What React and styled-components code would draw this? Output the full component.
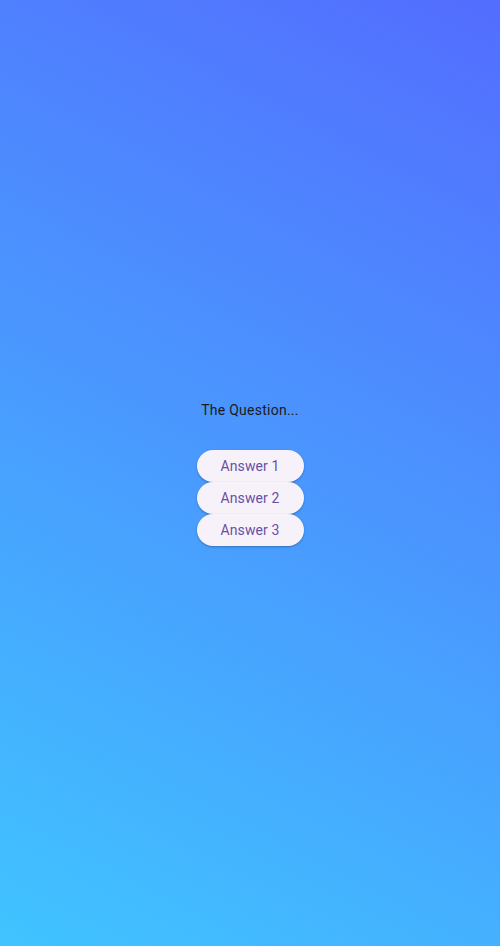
import React from "react";
import styled, { createGlobalStyle } from "styled-components";

const GlobalStyle = createGlobalStyle`
  html, body {
    margin: 0;
    padding: 0;
    height: 100%;
  }
  #root {
    height: 100%;
  }
`

const Screen = styled.div`
  width: 100%;
  height: 946px;
  display: flex;
  flex-direction: column;
  align-items: center;
  justify-content: center;
  background: linear-gradient(207.86deg, #536dfe 0%, #40c4ff 100%);
  font-family: Roboto, "Noto Sans", sans-serif;
`

const Question = styled.p`
  margin: 0 0 30px;
  font-size: 14px;
  line-height: 20px;
  letter-spacing: 0.25px;
  color: #1d1b20;
`

const Answers = styled.div`
  display: flex;
  flex-direction: column;
  align-items: center;
`

const AnswerButton = styled.button`
  height: 32px;
  width: 107px;
  padding: 0;
  border: none;
  border-radius: 16px;
  background: #f7f2fa;
  color: #6750a4;
  font-family: Roboto, "Noto Sans", sans-serif;
  font-size: 14px;
  font-weight: 400;
  letter-spacing: 0.1px;
  box-shadow: 0 1px 2px rgba(0, 0, 0, 0.18), 0 1px 3px rgba(0, 0, 0, 0.1);
  cursor: pointer;
`

const answers = ["Answer 1", "Answer 2", "Answer 3"]

export default function App() {
    return (
        <>
            <GlobalStyle/>
            <Screen>
                <Question>The Question...</Question>
                <Answers>
                    {answers.map((a) => (
                        <AnswerButton key={a}>{a}</AnswerButton>
                    ))}
                </Answers>
            </Screen>
        </>
    )
}
